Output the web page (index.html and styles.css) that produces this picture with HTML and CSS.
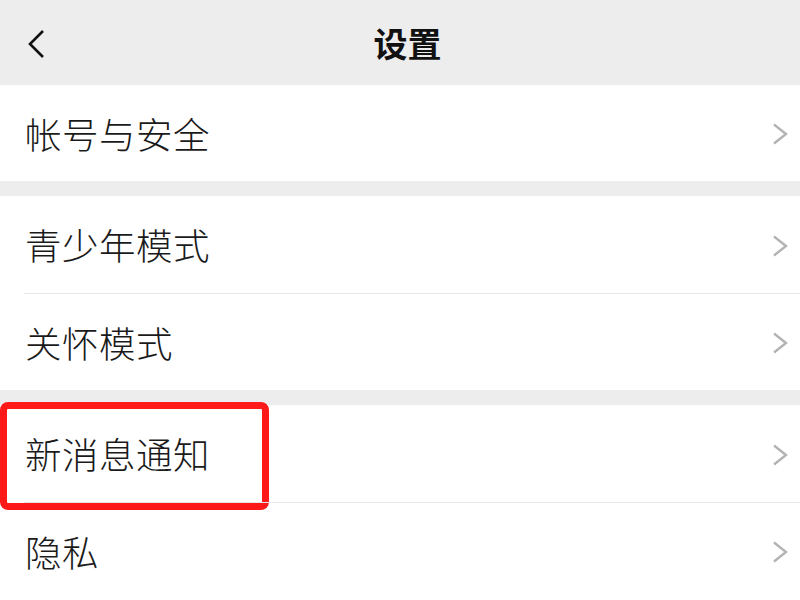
FILE: index.html
```html
<!DOCTYPE html>
<html lang="zh-CN">
<head>
    <meta charset="UTF-8">
    <title>设置</title>
    <link rel="stylesheet" href="styles.css">
</head>
<body>
    <div class="page">
        <div class="top-bar">
            <span class="back">
                <svg width="20" height="30" viewBox="0 0 20 30"><path d="M17 2 L4 15 L17 28" fill="none" stroke="#111" stroke-width="2.6"/></svg>
            </span>
            <span class="title">设置</span>
        </div>

        <div class="group">
            <div class="row"><span class="label">帐号与安全</span><span class="arrow"><svg width="16" height="22" viewBox="0 0 16 22"><path d="M2 1.5 L14 11 L2 20.5" fill="none" stroke="#b3b3b3" stroke-width="2.4"/></svg></span></div>
        </div>

        <div class="group">
            <div class="row"><span class="label">青少年模式</span><span class="arrow"><svg width="16" height="22" viewBox="0 0 16 22"><path d="M2 1.5 L14 11 L2 20.5" fill="none" stroke="#b3b3b3" stroke-width="2.4"/></svg></span></div>
            <div class="row"><span class="label">关怀模式</span><span class="arrow"><svg width="16" height="22" viewBox="0 0 16 22"><path d="M2 1.5 L14 11 L2 20.5" fill="none" stroke="#b3b3b3" stroke-width="2.4"/></svg></span></div>
        </div>

        <div class="group last">
            <div class="row highlight"><span class="label">新消息通知</span><span class="arrow"><svg width="16" height="22" viewBox="0 0 16 22"><path d="M2 1.5 L14 11 L2 20.5" fill="none" stroke="#b3b3b3" stroke-width="2.4"/></svg></span></div>
            <div class="row"><span class="label">隐私</span><span class="arrow"><svg width="16" height="22" viewBox="0 0 16 22"><path d="M2 1.5 L14 11 L2 20.5" fill="none" stroke="#b3b3b3" stroke-width="2.4"/></svg></span></div>
        </div>
    </div>
</body>
</html>
```

FILE: styles.css
```css
body {
    margin: 0;
    font-family: "Noto Sans CJK SC", "Noto Sans", sans-serif;
    background-color: #ededed;
    color: #1a1a1a;
}

.page {
    display: flex;
    flex-direction: column;
    gap: 15px;
    height: 600px;
    overflow: hidden;
}

.top-bar {
    height: 85px;
    margin-bottom: -15px;
    display: flex;
    align-items: center;
    justify-content: center;
    position: relative;
    background-color: #ededed;
}

.back {
    position: absolute;
    left: 26px;
    top: 29px;
    display: flex;
}

.title {
    font-size: 34px;
    font-weight: 700;
    color: #111;
    margin-left: 15px;
}

.group {
    background-color: #fff;
}

.group.last {
    flex: 1;
}

.row {
    height: 96px;
    display: flex;
    align-items: center;
    justify-content: space-between;
    padding: 0 12px 0 25px;
    position: relative;
}

.row:not(:last-child) {
    height: 97px;
}

.row + .row {
    border-top: 1px solid #e6e6e6;
    margin-left: 24px;
    padding-left: 1px;
}

.label {
    font-size: 36.5px;
    font-weight: 300;
    letter-spacing: 0.5px;
}

.arrow {
    display: flex;
    margin-top: 2px;
}

.highlight::after {
    content: "";
    position: absolute;
    left: 0;
    top: -3px;
    width: 255px;
    height: 94px;
    border: 7px solid #ff1a1a;
    border-radius: 8px;
}
```
